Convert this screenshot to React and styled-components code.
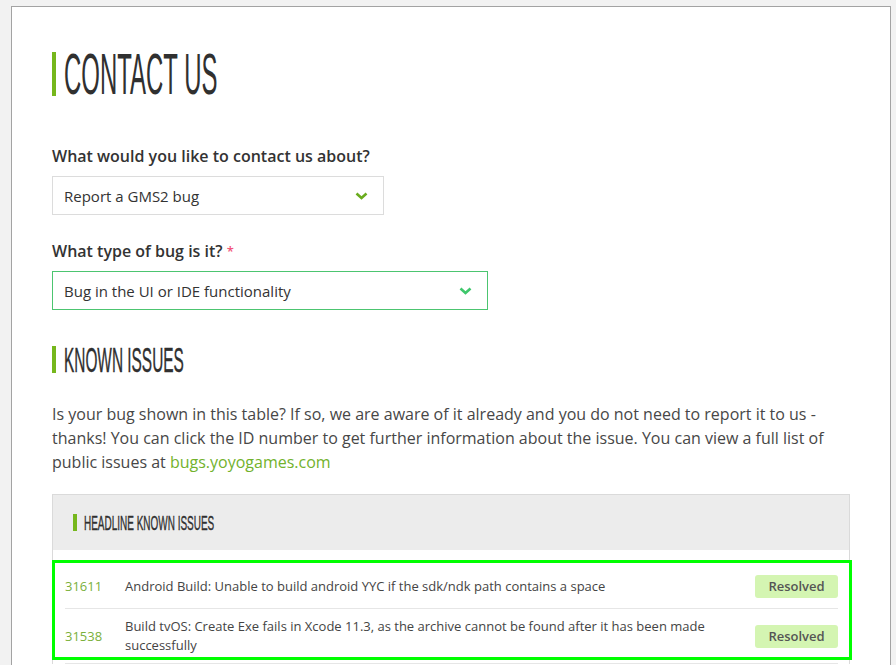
import styled, { createGlobalStyle } from 'styled-components'

const GlobalStyle = createGlobalStyle`
  html, body {
    margin: 0;
    padding: 0;
    background: #f2f2f2;
    font-family: "Open Sans", "Liberation Sans", sans-serif;
  }
`

const issues = [
  { id: '31611', text: 'Android Build: Unable to build android YYC if the sdk/ndk path contains a space', status: 'Resolved' },
  { id: '31538', text: 'Build tvOS: Create Exe fails in Xcode 11.3, as the archive cannot be found after it has been made successfully', status: 'Resolved' },
]

const Chevron = ({ color }) => (
  <svg width="13" height="8" viewBox="0 0 13 8">
    <polyline points="1.5,1.5 6.5,6 11.5,1.5" fill="none" stroke={color} strokeWidth="2.6" />
  </svg>
)

const App = () => {
  return (
    <>
      <GlobalStyle />
      <Page>
        <Panel>
          <Heading size={57} height={44} scale={0.42} stroke={0}>
            <span>CONTACT US</span>
          </Heading>

          <Label>What would you like to contact us about?</Label>
          <Select width={332}>
            <span>Report a GMS2 bug</span>
            <Chevron color="#6aac1e" />
          </Select>

          <Label gap={24}>
            What type of bug is it? <Required>*</Required>
          </Label>
          <Select width={436} active>
            <span>Bug in the UI or IDE functionality</span>
            <Chevron color="#3fc76c" />
          </Select>

          <Heading size={35} height={27} scale={0.44} gap={36}>
            <span>KNOWN ISSUES</span>
          </Heading>

          <Intro>
            Is your bug shown in this table? If so, we are aware of it already and you do not need to report it to us - thanks! You can click the ID number to get further information about the issue. You can view a full list of public issues at <a href="#">bugs.yoyogames.com</a>
          </Intro>

          <Table>
            <TableHead>
              <Heading size={21} height={17} scale={0.475} space={7}>
                <span>HEADLINE KNOWN ISSUES</span>
              </Heading>
            </TableHead>
            <TableBody>
              {issues.map(issue => (
                <Row key={issue.id}>
                  <IssueId href="#">{issue.id}</IssueId>
                  <Desc>{issue.text}</Desc>
                  <Badge>{issue.status}</Badge>
                </Row>
              ))}
              <Highlight />
            </TableBody>
          </Table>
        </Panel>
      </Page>
    </>
  )
}

const Page = styled.div`
  padding: 6px 0 0 11px;
  height: 659px;
  overflow: hidden;
`

const Panel = styled.div`
  box-sizing: border-box;
  width: 880px;
  min-height: 700px;
  background: #fff;
  border: 1px solid #a3a3a3;
  padding: 45px 40px 0 40px;
`

const Heading = styled.h2`
  display: flex;
  align-items: center;
  height: ${p => p.height}px;
  margin: ${p => p.gap || 0}px 0 0;
  font-family: "Liberation Sans", Arial, sans-serif;
  font-weight: 400;
  font-size: ${p => p.size}px;
  line-height: 1;
  color: #303030;
  &::before {
    content: '';
    align-self: stretch;
    flex: none;
    width: ${p => p.bar || 4}px;
    margin-right: ${p => p.space || 8}px;
    background: #76b71c;
  }
  span {
    display: inline-block;
    white-space: nowrap;
    transform: scaleX(${p => p.scale});
    transform-origin: left center;
    -webkit-text-stroke: ${p => (p.stroke ?? 0.4)}px #303030;
  }
`

const Label = styled.div`
  margin-top: ${p => p.gap || 48}px;
  font-size: 16px;
  line-height: 24px;
  font-weight: 600;
  color: #333;
`

const Required = styled.span`
  color: #f2557a;
  font-size: 13px;
  vertical-align: 1px;
`

const Select = styled.div`
  box-sizing: border-box;
  display: flex;
  align-items: center;
  justify-content: space-between;
  width: ${p => p.width}px;
  height: 39px;
  margin-top: 8px;
  padding: 0 15px 0 11px;
  border: 1px solid ${p => (p.active ? '#4cc570' : '#dcdcdc')};
  font-size: 15px;
  color: #333;
`

const Intro = styled.p`
  margin: 29px 0 0;
  font-size: 16px;
  line-height: 24px;
  color: #474747;
  a {
    color: #72b22c;
    text-decoration: none;
  }
`

const Table = styled.div`
  margin-top: 20px;
  border: 1px solid #dadada;
  border-bottom: none;
`

const TableHead = styled.div`
  display: flex;
  align-items: center;
  height: 55px;
  padding-left: 20px;
  background: #ececec;
`

const TableBody = styled.div`
  position: relative;
  padding: 15px 11px 0 12px;
`

const Row = styled.div`
  display: flex;
  align-items: center;
  min-height: 44px;
  box-sizing: border-box;
  padding: 8px 0;
  border-bottom: 1px solid #e6e6e6;
  font-size: 13px;
  line-height: 19px;
  color: #444;
`

const IssueId = styled.a`
  flex: none;
  width: 60px;
  color: #7ab03a;
  text-decoration: none;
`

const Desc = styled.div`
  flex: 1;
  padding-right: 20px;
`

const Badge = styled.span`
  flex: none;
  width: 83px;
  height: 23px;
  line-height: 23px;
  text-align: center;
  border-radius: 3px;
  background: #d4f5b2;
  color: #555;
  font-weight: 600;
  font-size: 13px;
`

const Highlight = styled.div`
  position: absolute;
  top: 10px;
  left: -1px;
  right: -3px;
  height: 100px;
  box-sizing: border-box;
  border: 3px solid #00ff00;
  pointer-events: none;
`

export default App
